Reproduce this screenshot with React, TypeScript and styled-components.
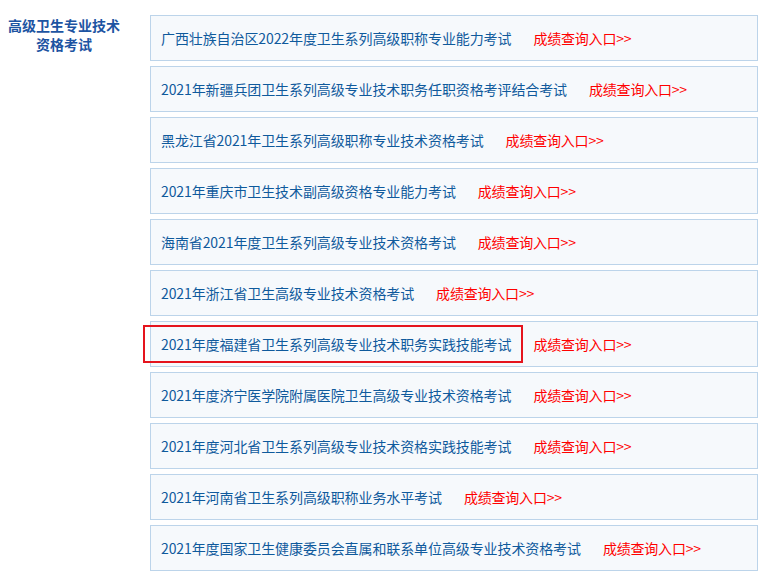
import React from 'react'
import styled, { createGlobalStyle } from 'styled-components'

const GlobalStyle = createGlobalStyle`
    html, body {
        margin: 0;
        padding: 0;
        background: #ffffff;
    }
    body {
        font-family: "Noto Sans CJK SC", "Noto Sans", sans-serif;
    }
`

const StyledPage = styled.div`
    display: flex;
    flex-direction: row;
    align-items: flex-start;
    padding-top: 15px;
`

const StyledSide = styled.div`
    width: 128px;
    flex-shrink: 0;
    text-align: center;
    font-size: 14px;
    font-weight: 700;
    line-height: 19px;
    color: #1d54a2;
    padding-top: 1px;
`

const StyledList = styled.div`
    margin-left: 22px;
    width: 608px;
    display: flex;
    flex-direction: column;
    gap: 5px;
`

const StyledRow = styled.div`
    height: 46px;
    box-sizing: border-box;
    border: 1px solid #bcd4ea;
    background: #f6f9fc;
    display: flex;
    align-items: center;
    padding-left: 10px;
    font-size: 14px;
`

const StyledTitle = styled.span<{ $marked?: boolean }>`
    position: relative;
    color: #0f5a9c;
    white-space: nowrap;
    letter-spacing: -0.1px;

    ${props => props.$marked && `
        &::after {
            content: '';
            position: absolute;
            left: -18px;
            right: -12px;
            top: 50%;
            height: 38px;
            margin-top: -19px;
            box-sizing: border-box;
            border: 2px solid #e5141d;
        }
    `}
`

const StyledLink = styled.a`
    margin-left: 22px;
    color: #ff0000;
    text-decoration: none;
    white-space: nowrap;
    cursor: pointer;
    letter-spacing: -0.2px;
`

const exams = [
    '广西壮族自治区2022年度卫生系列高级职称专业能力考试',
    '2021年新疆兵团卫生系列高级专业技术职务任职资格考评结合考试',
    '黑龙江省2021年卫生系列高级职称专业技术资格考试',
    '2021年重庆市卫生技术副高级资格专业能力考试',
    '海南省2021年度卫生系列高级专业技术资格考试',
    '2021年浙江省卫生高级专业技术资格考试',
    '2021年度福建省卫生系列高级专业技术职务实践技能考试',
    '2021年度济宁医学院附属医院卫生高级专业技术资格考试',
    '2021年度河北省卫生系列高级专业技术资格实践技能考试',
    '2021年河南省卫生系列高级职称业务水平考试',
    '2021年度国家卫生健康委员会直属和联系单位高级专业技术资格考试',
]

const MARKED = 6

const App = () => {
    return (<>
        <GlobalStyle />
        <StyledPage>
            <StyledSide>
                高级卫生专业技术<br />资格考试
            </StyledSide>
            <StyledList>
                {
                    exams.map((name, i) => {
                        return (
                            <StyledRow key={name}>
                                <StyledTitle $marked={i === MARKED}>{name}</StyledTitle>
                                <StyledLink>成绩查询入口&gt;&gt;</StyledLink>
                            </StyledRow>
                        )
                    })
                }
            </StyledList>
        </StyledPage>
    </>)
}

export default App
